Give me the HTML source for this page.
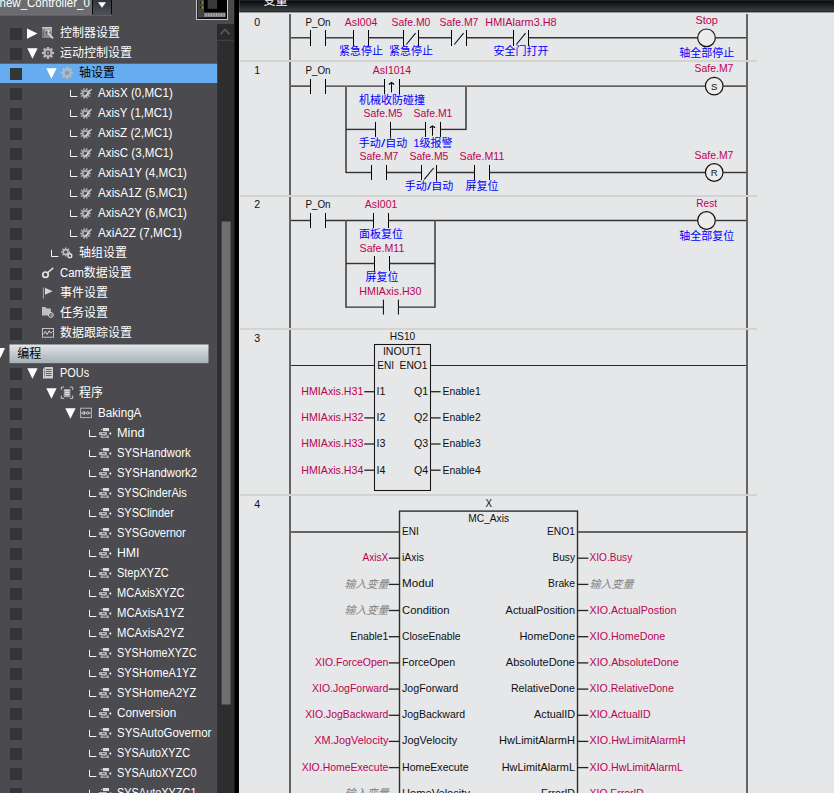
<!DOCTYPE html>
<html><head><meta charset="utf-8"><title>Ladder</title>
<style>
html,body{margin:0;padding:0;background:#e6e7e8;}
body{width:834px;height:793px;overflow:hidden;font-family:"Liberation Sans","Noto Sans CJK SC",sans-serif;}
svg{display:block;font-family:"Liberation Sans","Noto Sans CJK SC",sans-serif;}
</style></head><body>
<svg width="834" height="793" viewBox="0 0 834 793">
<defs>
<linearGradient id="tb" x1="0" y1="0" x2="0" y2="1"><stop offset="0" stop-color="#303032"/><stop offset="0.1" stop-color="#0b0c0d"/><stop offset="0.5" stop-color="#22262a"/><stop offset="0.82" stop-color="#393c3f"/><stop offset="0.9" stop-color="#2b2b2c"/><stop offset="1" stop-color="#2b2b2c"/></linearGradient>
<linearGradient id="hd" x1="0" y1="0" x2="0" y2="1"><stop offset="0" stop-color="#e3e7ea"/><stop offset="0.5" stop-color="#c3cad0"/><stop offset="1" stop-color="#a7b1b9"/></linearGradient>
<linearGradient id="bt" x1="0" y1="0" x2="0" y2="1"><stop offset="0" stop-color="#33343a"/><stop offset="1" stop-color="#4e515a"/></linearGradient>
</defs>
<rect x="0" y="0" width="834" height="793" fill="#e6e7e8"/>
<rect x="0" y="0" width="234" height="793" fill="#4a4a4f"/>
<rect x="234.1" y="0" width="5.1" height="793" fill="#000"/>
<rect x="239.2" y="12" width="0.9" height="781" fill="#f3f3f3"/>
<rect x="239.2" y="0" width="595" height="12.4" fill="url(#tb)"/>
<rect x="0" y="0" width="92" height="15" fill="#6c6c70"/>
<rect x="92" y="0" width="20" height="15" fill="#0a0a0a"/>
<rect x="93" y="0" width="18" height="14.6" fill="url(#bt)"/>
<path d="M98 2.2H106L102 7.8Z" fill="#fff"/>
<rect x="0" y="14.6" width="112" height="0.9" fill="#77777b"/>
<text x="-0.5" y="7.4" fill="#fff" font-size="12" textLength="90.3" lengthAdjust="spacingAndGlyphs">new_Controller_0</text>
<rect x="196.5" y="-2" width="31" height="21.5" fill="#000" stroke="#c8c8c8" stroke-width="1"/>
<rect x="197.5" y="0" width="6.5" height="19" fill="#444"/>
<rect x="207.7" y="0" width="9.4" height="8.8" fill="#3a3a3a"/>
<rect x="204" y="12.6" width="21.6" height="4.7" fill="#7c7c7c"/>
<rect x="205.5" y="13.2" width="1.1" height="3.2" fill="#adadad"/>
<rect x="208.1" y="13.2" width="1.1" height="3.2" fill="#adadad"/>
<rect x="210.7" y="13.2" width="1.1" height="3.2" fill="#adadad"/>
<rect x="213.3" y="13.2" width="1.1" height="3.2" fill="#adadad"/>
<rect x="215.9" y="13.2" width="1.1" height="3.2" fill="#adadad"/>
<rect x="218.5" y="13.2" width="1.1" height="3.2" fill="#adadad"/>
<rect x="221.1" y="13.2" width="1.1" height="3.2" fill="#adadad"/>
<rect x="223.7" y="13.2" width="1.1" height="3.2" fill="#adadad"/>
<rect x="197.5" y="17.5" width="29" height="1.5" fill="#111"/>
<path d="M199.5 2.5l2 -1.5v3zM199.5 7.5l2 -1.5v3z" fill="#000"/><rect x="201.5" y="1.2" width="1.6" height="2.6" fill="#a38c25"/><rect x="201.5" y="6.2" width="1.6" height="2.6" fill="#a38c25"/>
<rect x="217.2" y="24" width="16.8" height="769" fill="#2d2d2f"/>
<rect x="217.2" y="24" width="16.8" height="16" fill="#2a2a2d"/>
<rect x="217.2" y="39.8" width="16.8" height="0.9" fill="#48484c"/>
<path d="M220.4 34.3L225 29.5L229.6 34.3" fill="none" stroke="#58585b" stroke-width="1.8"/>
<rect x="221.6" y="221.5" width="9" height="483" fill="#6e6e6e"/>
<rect x="10" y="28" width="12" height="12" fill="#34343b"/>
<path d="M27.0 28.6L37.5 33.6L27.0 38.7Z" fill="#fff"/>
<rect x="42.2" y="27" width="9.8" height="10.9" fill="#8b8b8d"/>
<rect x="42.2" y="27" width="9.8" height="1.6" fill="#c9c9c9"/>
<rect x="45.2" y="29.2" width="6.8" height="2" fill="#b5b5b6"/>
<rect x="43" y="31.5" width="0.9" height="5.5" fill="#6a6a6c"/>
<circle cx="47.6" cy="32.6" r="1.9" fill="#59595c"/>
<path d="M47.6 32.6L53 38.3" stroke="#d8d8d8" stroke-width="1.7"/>
<circle cx="48.4" cy="31.6" r="1.1" fill="#e6e6e6"/>
<text x="60.0" y="37.3" fill="#fff" font-size="12" textLength="60" lengthAdjust="spacingAndGlyphs">控制器设置</text>
<rect x="10" y="48" width="12" height="12" fill="#34343b"/>
<path d="M27.3 48.3H37.6L32.45 58.7Z" fill="#fff"/>
<circle cx="48.0" cy="52.9" r="3.5" fill="none" stroke="#b9b9bc" stroke-width="2.1"/>
<path d="M52.00 52.90L54.00 52.90M50.83 55.73L52.24 57.14M48.00 56.90L48.00 58.90M45.17 55.73L43.76 57.14M44.00 52.90L42.00 52.90M45.17 50.07L43.76 48.66M48.00 48.90L48.00 46.90M50.83 50.07L52.24 48.66" stroke="#b9b9bc" stroke-width="2.3"/>
<rect x="46.9" y="51.8" width="2.2" height="2.2" fill="#97979a"/>
<text x="60.0" y="57.3" fill="#fff" font-size="12" textLength="72" lengthAdjust="spacingAndGlyphs">运动控制设置</text>
<rect x="0" y="63.7" width="217.2" height="19.3" fill="#67acee"/>
<rect x="10" y="68" width="12" height="12" fill="#34343b"/>
<path d="M46.3 68.3H56.6L51.45 78.7Z" fill="#fff"/>
<circle cx="67.0" cy="72.9" r="3.5" fill="none" stroke="#b9b9bc" stroke-width="2.1"/>
<path d="M71.00 72.90L73.00 72.90M69.83 75.73L71.24 77.14M67.00 76.90L67.00 78.90M64.17 75.73L62.76 77.14M63.00 72.90L61.00 72.90M64.17 70.07L62.76 68.66M67.00 68.90L67.00 66.90M69.83 70.07L71.24 68.66" stroke="#b9b9bc" stroke-width="2.3"/>
<rect x="65.9" y="71.8" width="2.2" height="2.2" fill="#97979a"/>
<text x="79.0" y="77.3" fill="#000" font-size="12" textLength="36" lengthAdjust="spacingAndGlyphs">轴设置</text>
<rect x="10" y="88" width="12" height="12" fill="#34343b"/>
<path d="M70.5 89.9V96.5H77.4" fill="none" stroke="#f4f4f4" stroke-width="1"/>
<circle cx="85.4" cy="93.4" r="2.6" fill="none" stroke="#adadb0" stroke-width="1.7"/>
<path d="M88.40 93.40L90.80 93.40M87.83 95.16L89.77 96.57M86.33 96.25L87.07 98.54M84.47 96.25L83.73 98.54M82.97 95.16L81.03 96.57M82.40 93.40L80.00 93.40M82.97 91.64L81.03 90.23M84.47 90.55L83.73 88.26M86.33 90.55L87.07 88.26M87.83 91.64L89.77 90.23" stroke="#adadb0" stroke-width="1.5"/>
<path d="M84.2 97.4L91.8 89.0" stroke="#e4e4e4" stroke-width="1.1"/>
<text x="98.0" y="97.1" fill="#fff" font-size="12" textLength="74.8" lengthAdjust="spacingAndGlyphs">AxisX (0,MC1)</text>
<rect x="10" y="108" width="12" height="12" fill="#34343b"/>
<path d="M70.5 109.9V116.5H77.4" fill="none" stroke="#f4f4f4" stroke-width="1"/>
<circle cx="85.4" cy="113.4" r="2.6" fill="none" stroke="#adadb0" stroke-width="1.7"/>
<path d="M88.40 113.40L90.80 113.40M87.83 115.16L89.77 116.57M86.33 116.25L87.07 118.54M84.47 116.25L83.73 118.54M82.97 115.16L81.03 116.57M82.40 113.40L80.00 113.40M82.97 111.64L81.03 110.23M84.47 110.55L83.73 108.26M86.33 110.55L87.07 108.26M87.83 111.64L89.77 110.23" stroke="#adadb0" stroke-width="1.5"/>
<path d="M84.2 117.4L91.8 109.0" stroke="#e4e4e4" stroke-width="1.1"/>
<text x="98.0" y="117.1" fill="#fff" font-size="12" textLength="74.3" lengthAdjust="spacingAndGlyphs">AxisY (1,MC1)</text>
<rect x="10" y="128" width="12" height="12" fill="#34343b"/>
<path d="M70.5 129.9V136.5H77.4" fill="none" stroke="#f4f4f4" stroke-width="1"/>
<circle cx="85.4" cy="133.4" r="2.6" fill="none" stroke="#adadb0" stroke-width="1.7"/>
<path d="M88.40 133.40L90.80 133.40M87.83 135.16L89.77 136.57M86.33 136.25L87.07 138.54M84.47 136.25L83.73 138.54M82.97 135.16L81.03 136.57M82.40 133.40L80.00 133.40M82.97 131.64L81.03 130.23M84.47 130.55L83.73 128.26M86.33 130.55L87.07 128.26M87.83 131.64L89.77 130.23" stroke="#adadb0" stroke-width="1.5"/>
<path d="M84.2 137.4L91.8 129.0" stroke="#e4e4e4" stroke-width="1.1"/>
<text x="98.0" y="137.1" fill="#fff" font-size="12" textLength="74.5" lengthAdjust="spacingAndGlyphs">AxisZ (2,MC1)</text>
<rect x="10" y="148" width="12" height="12" fill="#34343b"/>
<path d="M70.5 149.9V156.5H77.4" fill="none" stroke="#f4f4f4" stroke-width="1"/>
<circle cx="85.4" cy="153.4" r="2.6" fill="none" stroke="#adadb0" stroke-width="1.7"/>
<path d="M88.40 153.40L90.80 153.40M87.83 155.16L89.77 156.57M86.33 156.25L87.07 158.54M84.47 156.25L83.73 158.54M82.97 155.16L81.03 156.57M82.40 153.40L80.00 153.40M82.97 151.64L81.03 150.23M84.47 150.55L83.73 148.26M86.33 150.55L87.07 148.26M87.83 151.64L89.77 150.23" stroke="#adadb0" stroke-width="1.5"/>
<path d="M84.2 157.4L91.8 149.0" stroke="#e4e4e4" stroke-width="1.1"/>
<text x="98.0" y="157.1" fill="#fff" font-size="12" textLength="75.1" lengthAdjust="spacingAndGlyphs">AxisC (3,MC1)</text>
<rect x="10" y="168" width="12" height="12" fill="#34343b"/>
<path d="M70.5 169.9V176.5H77.4" fill="none" stroke="#f4f4f4" stroke-width="1"/>
<circle cx="85.4" cy="173.4" r="2.6" fill="none" stroke="#adadb0" stroke-width="1.7"/>
<path d="M88.40 173.40L90.80 173.40M87.83 175.16L89.77 176.57M86.33 176.25L87.07 178.54M84.47 176.25L83.73 178.54M82.97 175.16L81.03 176.57M82.40 173.40L80.00 173.40M82.97 171.64L81.03 170.23M84.47 170.55L83.73 168.26M86.33 170.55L87.07 168.26M87.83 171.64L89.77 170.23" stroke="#adadb0" stroke-width="1.5"/>
<path d="M84.2 177.4L91.8 169.0" stroke="#e4e4e4" stroke-width="1.1"/>
<text x="98.0" y="177.1" fill="#fff" font-size="12" textLength="89.0" lengthAdjust="spacingAndGlyphs">AxisA1Y (4,MC1)</text>
<rect x="10" y="188" width="12" height="12" fill="#34343b"/>
<path d="M70.5 189.9V196.5H77.4" fill="none" stroke="#f4f4f4" stroke-width="1"/>
<circle cx="85.4" cy="193.4" r="2.6" fill="none" stroke="#adadb0" stroke-width="1.7"/>
<path d="M88.40 193.40L90.80 193.40M87.83 195.16L89.77 196.57M86.33 196.25L87.07 198.54M84.47 196.25L83.73 198.54M82.97 195.16L81.03 196.57M82.40 193.40L80.00 193.40M82.97 191.64L81.03 190.23M84.47 190.55L83.73 188.26M86.33 190.55L87.07 188.26M87.83 191.64L89.77 190.23" stroke="#adadb0" stroke-width="1.5"/>
<path d="M84.2 197.4L91.8 189.0" stroke="#e4e4e4" stroke-width="1.1"/>
<text x="98.0" y="197.1" fill="#fff" font-size="12" textLength="89.2" lengthAdjust="spacingAndGlyphs">AxisA1Z (5,MC1)</text>
<rect x="10" y="208" width="12" height="12" fill="#34343b"/>
<path d="M70.5 209.9V216.5H77.4" fill="none" stroke="#f4f4f4" stroke-width="1"/>
<circle cx="85.4" cy="213.4" r="2.6" fill="none" stroke="#adadb0" stroke-width="1.7"/>
<path d="M88.40 213.40L90.80 213.40M87.83 215.16L89.77 216.57M86.33 216.25L87.07 218.54M84.47 216.25L83.73 218.54M82.97 215.16L81.03 216.57M82.40 213.40L80.00 213.40M82.97 211.64L81.03 210.23M84.47 210.55L83.73 208.26M86.33 210.55L87.07 208.26M87.83 211.64L89.77 210.23" stroke="#adadb0" stroke-width="1.5"/>
<path d="M84.2 217.4L91.8 209.0" stroke="#e4e4e4" stroke-width="1.1"/>
<text x="98.0" y="217.1" fill="#fff" font-size="12" textLength="89.0" lengthAdjust="spacingAndGlyphs">AxisA2Y (6,MC1)</text>
<rect x="10" y="228" width="12" height="12" fill="#34343b"/>
<path d="M70.5 229.9V236.5H77.4" fill="none" stroke="#f4f4f4" stroke-width="1"/>
<circle cx="85.4" cy="233.4" r="2.6" fill="none" stroke="#adadb0" stroke-width="1.7"/>
<path d="M88.40 233.40L90.80 233.40M87.83 235.16L89.77 236.57M86.33 236.25L87.07 238.54M84.47 236.25L83.73 238.54M82.97 235.16L81.03 236.57M82.40 233.40L80.00 233.40M82.97 231.64L81.03 230.23M84.47 230.55L83.73 228.26M86.33 230.55L87.07 228.26M87.83 231.64L89.77 230.23" stroke="#adadb0" stroke-width="1.5"/>
<path d="M84.2 237.4L91.8 229.0" stroke="#e4e4e4" stroke-width="1.1"/>
<text x="98.0" y="237.1" fill="#fff" font-size="12" textLength="83.9" lengthAdjust="spacingAndGlyphs">AxiA2Z (7,MC1)</text>
<rect x="10" y="248" width="12" height="12" fill="#34343b"/>
<path d="M51.5 249.9V256.5H58.4" fill="none" stroke="#f4f4f4" stroke-width="1"/>
<circle cx="65.7" cy="252.0" r="2.4" fill="none" stroke="#b9b9bc" stroke-width="1.6"/>
<path d="M68.50 252.00L70.30 252.00M67.68 253.98L68.95 255.25M65.70 254.80L65.70 256.60M63.72 253.98L62.45 255.25M62.90 252.00L61.10 252.00M63.72 250.02L62.45 248.75M65.70 249.20L65.70 247.40M67.68 250.02L68.95 248.75" stroke="#b9b9bc" stroke-width="1.6"/>
<circle cx="69.9" cy="255.7" r="1.9" fill="#4a4a4f" stroke="#e4e4e4" stroke-width="1.4"/>
<text x="79.0" y="257.3" fill="#fff" font-size="12" textLength="48" lengthAdjust="spacingAndGlyphs">轴组设置</text>
<rect x="10" y="268" width="12" height="12" fill="#34343b"/>
<circle cx="45.5" cy="274.7" r="2.7" fill="none" stroke="#e4e4e4" stroke-width="1.7"/>
<path d="M47.3 273L53.3 267.9" stroke="#e4e4e4" stroke-width="1.6"/>
<text x="60.0" y="277.3" fill="#fff" font-size="12" textLength="23.9" lengthAdjust="spacingAndGlyphs">Cam</text>
<text x="83.87" y="277.3" fill="#fff" font-size="12" textLength="48" lengthAdjust="spacingAndGlyphs">数据设置</text>
<rect x="10" y="288" width="12" height="12" fill="#34343b"/>
<path d="M43.4 287.4V298.6" stroke="#a9a9ac" stroke-width="1"/>
<path d="M45 287.8L52.6 291.3L45 294.8Z" fill="#d6d6d6"/>
<text x="60.0" y="297.3" fill="#fff" font-size="12" textLength="48" lengthAdjust="spacingAndGlyphs">事件设置</text>
<rect x="10" y="308" width="12" height="12" fill="#34343b"/>
<path d="M42 307h3.6l1 1.4h4.3v7h-8.9z" fill="#bfbfc1"/>
<circle cx="50.9" cy="315" r="2.4" fill="#4a4a4f" stroke="#e4e4e4" stroke-width="1"/>
<path d="M50.9 313.6V315.2H52.1" stroke="#e4e4e4" stroke-width="0.7" fill="none"/>
<text x="60.0" y="317.3" fill="#fff" font-size="12" textLength="48" lengthAdjust="spacingAndGlyphs">任务设置</text>
<rect x="10" y="328" width="12" height="12" fill="#34343b"/>
<rect x="42.5" y="328.5" width="11" height="8.7" fill="none" stroke="#c3c3c5" stroke-width="1"/>
<path d="M43.5 334.2l1.8 -2.8l1.8 3.2l2 -3.8l1.6 2.4l1.8 -1.8" fill="none" stroke="#e4e4e4" stroke-width="0.9"/>
<text x="60.0" y="337.3" fill="#fff" font-size="12" textLength="72" lengthAdjust="spacingAndGlyphs">数据跟踪设置</text>
<rect x="9.5" y="344.5" width="199" height="18.7" fill="url(#hd)"/>
<path d="M-4 348H5L0.5 358Z" fill="#fff"/>
<text x="17.3" y="357.5" fill="#000" font-size="12" textLength="24" lengthAdjust="spacingAndGlyphs">编程</text>
<rect x="10" y="368" width="12" height="12" fill="#34343b"/>
<path d="M27.3 368.3H37.6L32.45 378.7Z" fill="#fff"/>
<path d="M45 367h8v11.4h-10v-9.4z" fill="#cfcfd0"/>
<path d="M43 369h2v-2z" fill="#8d8d90"/>
<path d="M46 369.5h5.5M46 371.5h5.5M46 373.5h5.5M46 375.5h5.5" stroke="#606064" stroke-width="1"/>
<path d="M44.6 370v6.5" stroke="#77777a" stroke-width="0.9"/>
<text x="60.0" y="377.1" fill="#fff" font-size="12" textLength="29.1" lengthAdjust="spacingAndGlyphs">POUs</text>
<rect x="10" y="388" width="12" height="12" fill="#34343b"/>
<path d="M46.3 388.3H56.6L51.45 398.7Z" fill="#fff"/>
<path d="M61.3 389.90000000000003V387.1H64.1M69.9 387.1H72.7V389.90000000000003M72.7 395.59999999999997V398.4H69.9M64.1 398.4H61.3V395.59999999999997" fill="none" stroke="#c9c9cb" stroke-width="1"/>
<rect x="63.8" y="389" width="6.6" height="8.2" fill="#a5a5a8"/>
<path d="M65 390.6h4.2M65 392.6h4.2M65 394.6h4.2" stroke="#e8e8e8" stroke-width="1"/>
<text x="79.0" y="397.3" fill="#fff" font-size="12" textLength="24" lengthAdjust="spacingAndGlyphs">程序</text>
<rect x="10" y="408" width="12" height="12" fill="#34343b"/>
<path d="M65.3 408.3H75.6L70.45 418.7Z" fill="#fff"/>
<rect x="80.6" y="408.2" width="10.8" height="9.4" fill="none" stroke="#b6b6b8" stroke-width="1"/>
<path d="M81 413h2M84.6 413h2M89 413h2M83.2 411.2v3.6M84.5 411.2v3.6" stroke="#e4e4e4" stroke-width="0.8" fill="none"/>
<circle cx="87.8" cy="413" r="1.3" fill="none" stroke="#e4e4e4" stroke-width="0.8"/>
<text x="98.0" y="417.1" fill="#fff" font-size="12" textLength="43.4" lengthAdjust="spacingAndGlyphs">BakingA</text>
<rect x="10" y="428" width="12" height="12" fill="#34343b"/>
<path d="M89.5 429.9V436.5H96.4" fill="none" stroke="#f4f4f4" stroke-width="1"/>
<rect x="102.8" y="428" width="6.2" height="3.1" fill="#dcdcde"/>
<circle cx="101.4" cy="429.5" r="0.55" fill="#eee"/>
<rect x="98.9" y="432" width="7.9" height="3" fill="#b6b6b8"/>
<rect x="102" y="433.1" width="2.8" height="0.8" fill="#55555a"/>
<path d="M108.9 433.5l2.2 -1.4v2.8z" fill="#f0f0f0"/>
<rect x="100.6" y="435.4" width="8.4" height="2.6" fill="#a8a8aa"/>
<rect x="103" y="436.3" width="3.7" height="0.8" fill="#55555a"/>
<text x="117.0" y="437.1" fill="#fff" font-size="12" textLength="27.5" lengthAdjust="spacingAndGlyphs">Mind</text>
<rect x="10" y="448" width="12" height="12" fill="#34343b"/>
<path d="M89.5 449.9V456.5H96.4" fill="none" stroke="#f4f4f4" stroke-width="1"/>
<rect x="102.8" y="448" width="6.2" height="3.1" fill="#dcdcde"/>
<circle cx="101.4" cy="449.5" r="0.55" fill="#eee"/>
<rect x="98.9" y="452" width="7.9" height="3" fill="#b6b6b8"/>
<rect x="102" y="453.1" width="2.8" height="0.8" fill="#55555a"/>
<path d="M108.9 453.5l2.2 -1.4v2.8z" fill="#f0f0f0"/>
<rect x="100.6" y="455.4" width="8.4" height="2.6" fill="#a8a8aa"/>
<rect x="103" y="456.3" width="3.7" height="0.8" fill="#55555a"/>
<text x="117.0" y="457.1" fill="#fff" font-size="12" textLength="73.7" lengthAdjust="spacingAndGlyphs">SYSHandwork</text>
<rect x="10" y="468" width="12" height="12" fill="#34343b"/>
<path d="M89.5 469.9V476.5H96.4" fill="none" stroke="#f4f4f4" stroke-width="1"/>
<rect x="102.8" y="468" width="6.2" height="3.1" fill="#dcdcde"/>
<circle cx="101.4" cy="469.5" r="0.55" fill="#eee"/>
<rect x="98.9" y="472" width="7.9" height="3" fill="#b6b6b8"/>
<rect x="102" y="473.1" width="2.8" height="0.8" fill="#55555a"/>
<path d="M108.9 473.5l2.2 -1.4v2.8z" fill="#f0f0f0"/>
<rect x="100.6" y="475.4" width="8.4" height="2.6" fill="#a8a8aa"/>
<rect x="103" y="476.3" width="3.7" height="0.8" fill="#55555a"/>
<text x="117.0" y="477.1" fill="#fff" font-size="12" textLength="80.1" lengthAdjust="spacingAndGlyphs">SYSHandwork2</text>
<rect x="10" y="488" width="12" height="12" fill="#34343b"/>
<path d="M89.5 489.9V496.5H96.4" fill="none" stroke="#f4f4f4" stroke-width="1"/>
<rect x="102.8" y="488" width="6.2" height="3.1" fill="#dcdcde"/>
<circle cx="101.4" cy="489.5" r="0.55" fill="#eee"/>
<rect x="98.9" y="492" width="7.9" height="3" fill="#b6b6b8"/>
<rect x="102" y="493.1" width="2.8" height="0.8" fill="#55555a"/>
<path d="M108.9 493.5l2.2 -1.4v2.8z" fill="#f0f0f0"/>
<rect x="100.6" y="495.4" width="8.4" height="2.6" fill="#a8a8aa"/>
<rect x="103" y="496.3" width="3.7" height="0.8" fill="#55555a"/>
<text x="117.0" y="497.1" fill="#fff" font-size="12" textLength="69.7" lengthAdjust="spacingAndGlyphs">SYSCinderAis</text>
<rect x="10" y="508" width="12" height="12" fill="#34343b"/>
<path d="M89.5 509.9V516.5H96.4" fill="none" stroke="#f4f4f4" stroke-width="1"/>
<rect x="102.8" y="508" width="6.2" height="3.1" fill="#dcdcde"/>
<circle cx="101.4" cy="509.5" r="0.55" fill="#eee"/>
<rect x="98.9" y="512" width="7.9" height="3" fill="#b6b6b8"/>
<rect x="102" y="513.1" width="2.8" height="0.8" fill="#55555a"/>
<path d="M108.9 513.5l2.2 -1.4v2.8z" fill="#f0f0f0"/>
<rect x="100.6" y="515.4" width="8.4" height="2.6" fill="#a8a8aa"/>
<rect x="103" y="516.3" width="3.7" height="0.8" fill="#55555a"/>
<text x="117.0" y="517.1" fill="#fff" font-size="12" textLength="56.9" lengthAdjust="spacingAndGlyphs">SYSClinder</text>
<rect x="10" y="528" width="12" height="12" fill="#34343b"/>
<path d="M89.5 529.9V536.5H96.4" fill="none" stroke="#f4f4f4" stroke-width="1"/>
<rect x="102.8" y="528" width="6.2" height="3.1" fill="#dcdcde"/>
<circle cx="101.4" cy="529.5" r="0.55" fill="#eee"/>
<rect x="98.9" y="532" width="7.9" height="3" fill="#b6b6b8"/>
<rect x="102" y="533.1" width="2.8" height="0.8" fill="#55555a"/>
<path d="M108.9 533.5l2.2 -1.4v2.8z" fill="#f0f0f0"/>
<rect x="100.6" y="535.4" width="8.4" height="2.6" fill="#a8a8aa"/>
<rect x="103" y="536.3" width="3.7" height="0.8" fill="#55555a"/>
<text x="117.0" y="537.1" fill="#fff" font-size="12" textLength="68.8" lengthAdjust="spacingAndGlyphs">SYSGovernor</text>
<rect x="10" y="548" width="12" height="12" fill="#34343b"/>
<path d="M89.5 549.9V556.5H96.4" fill="none" stroke="#f4f4f4" stroke-width="1"/>
<rect x="102.8" y="548" width="6.2" height="3.1" fill="#dcdcde"/>
<circle cx="101.4" cy="549.5" r="0.55" fill="#eee"/>
<rect x="98.9" y="552" width="7.9" height="3" fill="#b6b6b8"/>
<rect x="102" y="553.1" width="2.8" height="0.8" fill="#55555a"/>
<path d="M108.9 553.5l2.2 -1.4v2.8z" fill="#f0f0f0"/>
<rect x="100.6" y="555.4" width="8.4" height="2.6" fill="#a8a8aa"/>
<rect x="103" y="556.3" width="3.7" height="0.8" fill="#55555a"/>
<text x="117.0" y="557.1" fill="#fff" font-size="12" textLength="22.5" lengthAdjust="spacingAndGlyphs">HMI</text>
<rect x="10" y="568" width="12" height="12" fill="#34343b"/>
<path d="M89.5 569.9V576.5H96.4" fill="none" stroke="#f4f4f4" stroke-width="1"/>
<rect x="102.8" y="568" width="6.2" height="3.1" fill="#dcdcde"/>
<circle cx="101.4" cy="569.5" r="0.55" fill="#eee"/>
<rect x="98.9" y="572" width="7.9" height="3" fill="#b6b6b8"/>
<rect x="102" y="573.1" width="2.8" height="0.8" fill="#55555a"/>
<path d="M108.9 573.5l2.2 -1.4v2.8z" fill="#f0f0f0"/>
<rect x="100.6" y="575.4" width="8.4" height="2.6" fill="#a8a8aa"/>
<rect x="103" y="576.3" width="3.7" height="0.8" fill="#55555a"/>
<text x="117.0" y="577.1" fill="#fff" font-size="12" textLength="51.8" lengthAdjust="spacingAndGlyphs">StepXYZC</text>
<rect x="10" y="588" width="12" height="12" fill="#34343b"/>
<path d="M89.5 589.9V596.5H96.4" fill="none" stroke="#f4f4f4" stroke-width="1"/>
<rect x="102.8" y="588" width="6.2" height="3.1" fill="#dcdcde"/>
<circle cx="101.4" cy="589.5" r="0.55" fill="#eee"/>
<rect x="98.9" y="592" width="7.9" height="3" fill="#b6b6b8"/>
<rect x="102" y="593.1" width="2.8" height="0.8" fill="#55555a"/>
<path d="M108.9 593.5l2.2 -1.4v2.8z" fill="#f0f0f0"/>
<rect x="100.6" y="595.4" width="8.4" height="2.6" fill="#a8a8aa"/>
<rect x="103" y="596.3" width="3.7" height="0.8" fill="#55555a"/>
<text x="117.0" y="597.1" fill="#fff" font-size="12" textLength="67.4" lengthAdjust="spacingAndGlyphs">MCAxisXYZC</text>
<rect x="10" y="608" width="12" height="12" fill="#34343b"/>
<path d="M89.5 609.9V616.5H96.4" fill="none" stroke="#f4f4f4" stroke-width="1"/>
<rect x="102.8" y="608" width="6.2" height="3.1" fill="#dcdcde"/>
<circle cx="101.4" cy="609.5" r="0.55" fill="#eee"/>
<rect x="98.9" y="612" width="7.9" height="3" fill="#b6b6b8"/>
<rect x="102" y="613.1" width="2.8" height="0.8" fill="#55555a"/>
<path d="M108.9 613.5l2.2 -1.4v2.8z" fill="#f0f0f0"/>
<rect x="100.6" y="615.4" width="8.4" height="2.6" fill="#a8a8aa"/>
<rect x="103" y="616.3" width="3.7" height="0.8" fill="#55555a"/>
<text x="117.0" y="617.1" fill="#fff" font-size="12" textLength="67.1" lengthAdjust="spacingAndGlyphs">MCAxisA1YZ</text>
<rect x="10" y="628" width="12" height="12" fill="#34343b"/>
<path d="M89.5 629.9V636.5H96.4" fill="none" stroke="#f4f4f4" stroke-width="1"/>
<rect x="102.8" y="628" width="6.2" height="3.1" fill="#dcdcde"/>
<circle cx="101.4" cy="629.5" r="0.55" fill="#eee"/>
<rect x="98.9" y="632" width="7.9" height="3" fill="#b6b6b8"/>
<rect x="102" y="633.1" width="2.8" height="0.8" fill="#55555a"/>
<path d="M108.9 633.5l2.2 -1.4v2.8z" fill="#f0f0f0"/>
<rect x="100.6" y="635.4" width="8.4" height="2.6" fill="#a8a8aa"/>
<rect x="103" y="636.3" width="3.7" height="0.8" fill="#55555a"/>
<text x="117.0" y="637.1" fill="#fff" font-size="12" textLength="67.1" lengthAdjust="spacingAndGlyphs">MCAxisA2YZ</text>
<rect x="10" y="648" width="12" height="12" fill="#34343b"/>
<path d="M89.5 649.9V656.5H96.4" fill="none" stroke="#f4f4f4" stroke-width="1"/>
<rect x="102.8" y="648" width="6.2" height="3.1" fill="#dcdcde"/>
<circle cx="101.4" cy="649.5" r="0.55" fill="#eee"/>
<rect x="98.9" y="652" width="7.9" height="3" fill="#b6b6b8"/>
<rect x="102" y="653.1" width="2.8" height="0.8" fill="#55555a"/>
<path d="M108.9 653.5l2.2 -1.4v2.8z" fill="#f0f0f0"/>
<rect x="100.6" y="655.4" width="8.4" height="2.6" fill="#a8a8aa"/>
<rect x="103" y="656.3" width="3.7" height="0.8" fill="#55555a"/>
<text x="117.0" y="657.1" fill="#fff" font-size="12" textLength="79.5" lengthAdjust="spacingAndGlyphs">SYSHomeXYZC</text>
<rect x="10" y="668" width="12" height="12" fill="#34343b"/>
<path d="M89.5 669.9V676.5H96.4" fill="none" stroke="#f4f4f4" stroke-width="1"/>
<rect x="102.8" y="668" width="6.2" height="3.1" fill="#dcdcde"/>
<circle cx="101.4" cy="669.5" r="0.55" fill="#eee"/>
<rect x="98.9" y="672" width="7.9" height="3" fill="#b6b6b8"/>
<rect x="102" y="673.1" width="2.8" height="0.8" fill="#55555a"/>
<path d="M108.9 673.5l2.2 -1.4v2.8z" fill="#f0f0f0"/>
<rect x="100.6" y="675.4" width="8.4" height="2.6" fill="#a8a8aa"/>
<rect x="103" y="676.3" width="3.7" height="0.8" fill="#55555a"/>
<text x="117.0" y="677.1" fill="#fff" font-size="12" textLength="79.2" lengthAdjust="spacingAndGlyphs">SYSHomeA1YZ</text>
<rect x="10" y="688" width="12" height="12" fill="#34343b"/>
<path d="M89.5 689.9V696.5H96.4" fill="none" stroke="#f4f4f4" stroke-width="1"/>
<rect x="102.8" y="688" width="6.2" height="3.1" fill="#dcdcde"/>
<circle cx="101.4" cy="689.5" r="0.55" fill="#eee"/>
<rect x="98.9" y="692" width="7.9" height="3" fill="#b6b6b8"/>
<rect x="102" y="693.1" width="2.8" height="0.8" fill="#55555a"/>
<path d="M108.9 693.5l2.2 -1.4v2.8z" fill="#f0f0f0"/>
<rect x="100.6" y="695.4" width="8.4" height="2.6" fill="#a8a8aa"/>
<rect x="103" y="696.3" width="3.7" height="0.8" fill="#55555a"/>
<text x="117.0" y="697.1" fill="#fff" font-size="12" textLength="79.2" lengthAdjust="spacingAndGlyphs">SYSHomeA2YZ</text>
<rect x="10" y="708" width="12" height="12" fill="#34343b"/>
<path d="M89.5 709.9V716.5H96.4" fill="none" stroke="#f4f4f4" stroke-width="1"/>
<rect x="102.8" y="708" width="6.2" height="3.1" fill="#dcdcde"/>
<circle cx="101.4" cy="709.5" r="0.55" fill="#eee"/>
<rect x="98.9" y="712" width="7.9" height="3" fill="#b6b6b8"/>
<rect x="102" y="713.1" width="2.8" height="0.8" fill="#55555a"/>
<path d="M108.9 713.5l2.2 -1.4v2.8z" fill="#f0f0f0"/>
<rect x="100.6" y="715.4" width="8.4" height="2.6" fill="#a8a8aa"/>
<rect x="103" y="716.3" width="3.7" height="0.8" fill="#55555a"/>
<text x="117.0" y="717.1" fill="#fff" font-size="12" textLength="59.2" lengthAdjust="spacingAndGlyphs">Conversion</text>
<rect x="10" y="728" width="12" height="12" fill="#34343b"/>
<path d="M89.5 729.9V736.5H96.4" fill="none" stroke="#f4f4f4" stroke-width="1"/>
<rect x="102.8" y="728" width="6.2" height="3.1" fill="#dcdcde"/>
<circle cx="101.4" cy="729.5" r="0.55" fill="#eee"/>
<rect x="98.9" y="732" width="7.9" height="3" fill="#b6b6b8"/>
<rect x="102" y="733.1" width="2.8" height="0.8" fill="#55555a"/>
<path d="M108.9 733.5l2.2 -1.4v2.8z" fill="#f0f0f0"/>
<rect x="100.6" y="735.4" width="8.4" height="2.6" fill="#a8a8aa"/>
<rect x="103" y="736.3" width="3.7" height="0.8" fill="#55555a"/>
<text x="117.0" y="737.1" fill="#fff" font-size="12" textLength="94.4" lengthAdjust="spacingAndGlyphs">SYSAutoGovernor</text>
<rect x="10" y="748" width="12" height="12" fill="#34343b"/>
<path d="M89.5 749.9V756.5H96.4" fill="none" stroke="#f4f4f4" stroke-width="1"/>
<rect x="102.8" y="748" width="6.2" height="3.1" fill="#dcdcde"/>
<circle cx="101.4" cy="749.5" r="0.55" fill="#eee"/>
<rect x="98.9" y="752" width="7.9" height="3" fill="#b6b6b8"/>
<rect x="102" y="753.1" width="2.8" height="0.8" fill="#55555a"/>
<path d="M108.9 753.5l2.2 -1.4v2.8z" fill="#f0f0f0"/>
<rect x="100.6" y="755.4" width="8.4" height="2.6" fill="#a8a8aa"/>
<rect x="103" y="756.3" width="3.7" height="0.8" fill="#55555a"/>
<text x="117.0" y="757.1" fill="#fff" font-size="12" textLength="73.0" lengthAdjust="spacingAndGlyphs">SYSAutoXYZC</text>
<rect x="10" y="768" width="12" height="12" fill="#34343b"/>
<path d="M89.5 769.9V776.5H96.4" fill="none" stroke="#f4f4f4" stroke-width="1"/>
<rect x="102.8" y="768" width="6.2" height="3.1" fill="#dcdcde"/>
<circle cx="101.4" cy="769.5" r="0.55" fill="#eee"/>
<rect x="98.9" y="772" width="7.9" height="3" fill="#b6b6b8"/>
<rect x="102" y="773.1" width="2.8" height="0.8" fill="#55555a"/>
<path d="M108.9 773.5l2.2 -1.4v2.8z" fill="#f0f0f0"/>
<rect x="100.6" y="775.4" width="8.4" height="2.6" fill="#a8a8aa"/>
<rect x="103" y="776.3" width="3.7" height="0.8" fill="#55555a"/>
<text x="117.0" y="777.1" fill="#fff" font-size="12" textLength="79.5" lengthAdjust="spacingAndGlyphs">SYSAutoXYZC0</text>
<rect x="10" y="788" width="12" height="12" fill="#34343b"/>
<path d="M89.5 789.9V796.5H96.4" fill="none" stroke="#f4f4f4" stroke-width="1"/>
<rect x="102.8" y="788" width="6.2" height="3.1" fill="#dcdcde"/>
<circle cx="101.4" cy="789.5" r="0.55" fill="#eee"/>
<rect x="98.9" y="792" width="7.9" height="3" fill="#b6b6b8"/>
<rect x="102" y="793.1" width="2.8" height="0.8" fill="#55555a"/>
<path d="M108.9 793.5l2.2 -1.4v2.8z" fill="#f0f0f0"/>
<rect x="100.6" y="795.4" width="8.4" height="2.6" fill="#a8a8aa"/>
<rect x="103" y="796.3" width="3.7" height="0.8" fill="#55555a"/>
<text x="117.0" y="797.1" fill="#fff" font-size="12" textLength="79.5" lengthAdjust="spacingAndGlyphs">SYSAutoXYZC1</text>
<rect x="289" y="14" width="2" height="46.0" fill="#646464"/>
<rect x="746" y="14" width="2" height="46.0" fill="#646464"/>
<rect x="289" y="62" width="2" height="133.0" fill="#646464"/>
<rect x="746" y="62" width="2" height="133.0" fill="#646464"/>
<rect x="289" y="197" width="2" height="131.0" fill="#646464"/>
<rect x="746" y="197" width="2" height="131.0" fill="#646464"/>
<rect x="289" y="330" width="2" height="164.0" fill="#646464"/>
<rect x="746" y="330" width="2" height="164.0" fill="#646464"/>
<rect x="289" y="496" width="2" height="297.0" fill="#646464"/>
<rect x="746" y="496" width="2" height="297.0" fill="#646464"/>
<rect x="240" y="60" width="517" height="2" fill="#d3d3cf"/>
<rect x="240" y="195" width="517" height="2" fill="#d3d3cf"/>
<rect x="240" y="328" width="517" height="2" fill="#d3d3cf"/>
<rect x="240" y="494" width="517" height="2" fill="#d3d3cf"/>
<text x="254.2" y="25.6" fill="#101010" font-size="11" textLength="5.9" lengthAdjust="spacingAndGlyphs">0</text>
<text x="254.2" y="73.7" fill="#101010" font-size="11" textLength="5.9" lengthAdjust="spacingAndGlyphs">1</text>
<text x="254.2" y="208.3" fill="#101010" font-size="11" textLength="5.9" lengthAdjust="spacingAndGlyphs">2</text>
<text x="254.2" y="342.0" fill="#101010" font-size="11" textLength="5.9" lengthAdjust="spacingAndGlyphs">3</text>
<text x="254.2" y="507.6" fill="#101010" font-size="11" textLength="5.9" lengthAdjust="spacingAndGlyphs">4</text>
<path d="M291.0 37.8H310.5" stroke="#333333" stroke-width="1.4"/>
<path d="M310.5 30.0V46.0" stroke="#000" stroke-width="1.0"/>
<path d="M325.5 30.0V46.0" stroke="#000" stroke-width="1.0"/>
<text x="318.0" y="25.5" fill="#101010" font-size="11" text-anchor="middle" textLength="25.2" lengthAdjust="spacingAndGlyphs">P_On</text>
<path d="M325.5 37.8H353.5" stroke="#333333" stroke-width="1.4"/>
<path d="M353.5 30.0V46.0" stroke="#000" stroke-width="1.0"/>
<path d="M368.5 30.0V46.0" stroke="#000" stroke-width="1.0"/>
<text x="361.0" y="25.5" fill="#bb0353" font-size="11" text-anchor="middle" textLength="32.5" lengthAdjust="spacingAndGlyphs">AsI004</text>
<text x="339.0" y="55.2" fill="#0000ff" font-size="11" textLength="44" lengthAdjust="spacingAndGlyphs">紧急停止</text>
<path d="M368.5 37.8H403.5" stroke="#333333" stroke-width="1.4"/>
<path d="M403.5 30.0V46.0" stroke="#000" stroke-width="1.0"/>
<path d="M418.5 30.0V46.0" stroke="#000" stroke-width="1.0"/>
<path d="M406.3 44.5L415.6 33.2" stroke="#111" stroke-width="1.1"/>
<text x="411.0" y="25.5" fill="#bb0353" font-size="11" text-anchor="middle" textLength="38.8" lengthAdjust="spacingAndGlyphs">Safe.M0</text>
<text x="389.0" y="55.2" fill="#0000ff" font-size="11" textLength="44" lengthAdjust="spacingAndGlyphs">紧急停止</text>
<path d="M418.5 37.8H451.5" stroke="#333333" stroke-width="1.4"/>
<path d="M451.5 30.0V46.0" stroke="#000" stroke-width="1.0"/>
<path d="M466.5 30.0V46.0" stroke="#000" stroke-width="1.0"/>
<path d="M454.3 44.5L463.6 33.2" stroke="#111" stroke-width="1.1"/>
<text x="459.0" y="25.5" fill="#bb0353" font-size="11" text-anchor="middle" textLength="38.8" lengthAdjust="spacingAndGlyphs">Safe.M7</text>
<path d="M466.5 37.8H513.5" stroke="#333333" stroke-width="1.4"/>
<path d="M513.5 30.0V46.0" stroke="#000" stroke-width="1.0"/>
<path d="M528.5 30.0V46.0" stroke="#000" stroke-width="1.0"/>
<path d="M516.3 44.5L525.6 33.2" stroke="#111" stroke-width="1.1"/>
<text x="521.0" y="25.5" fill="#bb0353" font-size="11" text-anchor="middle" textLength="71.3" lengthAdjust="spacingAndGlyphs">HMIAlarm3.H8</text>
<text x="493.5" y="55.2" fill="#0000ff" font-size="11" textLength="55" lengthAdjust="spacingAndGlyphs">安全门打开</text>
<path d="M528.5 37.8H697.6" stroke="#333333" stroke-width="1.4"/>
<circle cx="706.5" cy="37.8" r="8.8" fill="#ececed" stroke="#111" stroke-width="1.2"/>
<path d="M715.4 37.8H746.0" stroke="#333333" stroke-width="1.4"/>
<text x="706.7" y="24.0" fill="#bb0353" font-size="11" text-anchor="middle" textLength="22.5" lengthAdjust="spacingAndGlyphs">Stop</text>
<text x="679.2" y="56.7" fill="#0000ff" font-size="11" textLength="55" lengthAdjust="spacingAndGlyphs">轴全部停止</text>
<path d="M291.0 86.1H310.5" stroke="#333333" stroke-width="1.4"/>
<path d="M310.5 79.0V94.0" stroke="#000" stroke-width="1.0"/>
<path d="M325.5 79.0V94.0" stroke="#000" stroke-width="1.0"/>
<text x="318.0" y="73.8" fill="#101010" font-size="11" text-anchor="middle" textLength="25.2" lengthAdjust="spacingAndGlyphs">P_On</text>
<path d="M325.5 86.1H384.5" stroke="#333333" stroke-width="1.4"/>
<path d="M384.5 79.0V94.0" stroke="#000" stroke-width="1.0"/>
<path d="M399.5 79.0V94.0" stroke="#000" stroke-width="1.0"/>
<path d="M391.5 92.4V82.9" fill="none" stroke="#000" stroke-width="1"/>
<path d="M388.9 84.5L391.5 82.6L394.1 84.5" fill="none" stroke="#000" stroke-width="1.2"/>
<text x="392.0" y="73.8" fill="#bb0353" font-size="11" text-anchor="middle" textLength="38.4" lengthAdjust="spacingAndGlyphs">AsI1014</text>
<text x="359.0" y="103.5" fill="#0000ff" font-size="11" textLength="66" lengthAdjust="spacingAndGlyphs">机械收防碰撞</text>
<path d="M399.5 86.1H705.3" stroke="#333333" stroke-width="1.4"/>
<circle cx="714.2" cy="86.1" r="8.8" fill="#ececed" stroke="#111" stroke-width="1.2"/>
<text x="714.2" y="89.6" fill="#101010" font-size="9.5" text-anchor="middle">S</text>
<path d="M723.1 86.1H746.0" stroke="#333333" stroke-width="1.4"/>
<text x="714.0" y="72.0" fill="#bb0353" font-size="11" text-anchor="middle" textLength="38.8" lengthAdjust="spacingAndGlyphs">Safe.M7</text>
<path d="M346.0 86.1V173.1" stroke="#646464" stroke-width="2"/>
<path d="M466.0 86.1V130.1" stroke="#646464" stroke-width="2"/>
<path d="M346.0 129.4H375.5" stroke="#333333" stroke-width="1.4"/>
<path d="M375.5 121.9V136.9" stroke="#000" stroke-width="1.0"/>
<path d="M390.5 121.9V136.9" stroke="#000" stroke-width="1.0"/>
<text x="383.0" y="117.0" fill="#bb0353" font-size="11" text-anchor="middle" textLength="38.8" lengthAdjust="spacingAndGlyphs">Safe.M5</text>
<text x="358.85" y="146.7" fill="#0000ff" font-size="11" textLength="22" lengthAdjust="spacingAndGlyphs">手动</text>
<text x="380.9" y="146.7" fill="#0000ff" font-size="11" textLength="4.3" lengthAdjust="spacingAndGlyphs">/</text>
<text x="385.15" y="146.7" fill="#0000ff" font-size="11" textLength="22" lengthAdjust="spacingAndGlyphs">自动</text>
<path d="M390.5 129.4H425.5" stroke="#333333" stroke-width="1.4"/>
<path d="M425.5 121.9V136.9" stroke="#000" stroke-width="1.0"/>
<path d="M440.5 121.9V136.9" stroke="#000" stroke-width="1.0"/>
<path d="M432.5 135.7V126.2" fill="none" stroke="#000" stroke-width="1"/>
<path d="M429.9 127.8L432.5 125.9L435.1 127.8" fill="none" stroke="#000" stroke-width="1.2"/>
<text x="433.0" y="117.0" fill="#bb0353" font-size="11" text-anchor="middle" textLength="38.8" lengthAdjust="spacingAndGlyphs">Safe.M1</text>
<text x="413.5" y="146.7" fill="#0000ff" font-size="11" textLength="5.9" lengthAdjust="spacingAndGlyphs">1</text>
<text x="419.46" y="146.7" fill="#0000ff" font-size="11" textLength="33" lengthAdjust="spacingAndGlyphs">级报警</text>
<path d="M440.5 129.4H466.0" stroke="#333333" stroke-width="1.4"/>
<path d="M346.0 172.5H371.5" stroke="#333333" stroke-width="1.4"/>
<path d="M371.5 165.0V180.0" stroke="#000" stroke-width="1.0"/>
<path d="M386.5 165.0V180.0" stroke="#000" stroke-width="1.0"/>
<text x="379.0" y="160.2" fill="#bb0353" font-size="11" text-anchor="middle" textLength="38.8" lengthAdjust="spacingAndGlyphs">Safe.M7</text>
<path d="M386.5 172.5H421.5" stroke="#333333" stroke-width="1.4"/>
<path d="M421.5 165.0V180.0" stroke="#000" stroke-width="1.0"/>
<path d="M436.5 165.0V180.0" stroke="#000" stroke-width="1.0"/>
<path d="M424.3 179.3L433.6 168.0" stroke="#111" stroke-width="1.1"/>
<text x="429.0" y="160.2" fill="#bb0353" font-size="11" text-anchor="middle" textLength="38.8" lengthAdjust="spacingAndGlyphs">Safe.M5</text>
<text x="404.85" y="189.9" fill="#0000ff" font-size="11" textLength="22" lengthAdjust="spacingAndGlyphs">手动</text>
<text x="426.9" y="189.9" fill="#0000ff" font-size="11" textLength="4.3" lengthAdjust="spacingAndGlyphs">/</text>
<text x="431.15" y="189.9" fill="#0000ff" font-size="11" textLength="22" lengthAdjust="spacingAndGlyphs">自动</text>
<path d="M436.5 172.5H474.5" stroke="#333333" stroke-width="1.4"/>
<path d="M474.5 165.0V180.0" stroke="#000" stroke-width="1.0"/>
<path d="M489.5 165.0V180.0" stroke="#000" stroke-width="1.0"/>
<text x="482.0" y="160.2" fill="#bb0353" font-size="11" text-anchor="middle" textLength="44.8" lengthAdjust="spacingAndGlyphs">Safe.M11</text>
<text x="465.5" y="189.9" fill="#0000ff" font-size="11" textLength="33" lengthAdjust="spacingAndGlyphs">屏复位</text>
<path d="M489.5 172.5H705.3" stroke="#333333" stroke-width="1.4"/>
<circle cx="714.2" cy="172.5" r="8.8" fill="#ececed" stroke="#111" stroke-width="1.2"/>
<text x="714.2" y="176.0" fill="#101010" font-size="9.5" text-anchor="middle">R</text>
<path d="M723.1 172.5H746.0" stroke="#333333" stroke-width="1.4"/>
<text x="714.0" y="158.7" fill="#bb0353" font-size="11" text-anchor="middle" textLength="38.8" lengthAdjust="spacingAndGlyphs">Safe.M7</text>
<path d="M291.0 220.5H310.5" stroke="#333333" stroke-width="1.4"/>
<path d="M310.5 213.0V228.0" stroke="#000" stroke-width="1.0"/>
<path d="M325.5 213.0V228.0" stroke="#000" stroke-width="1.0"/>
<text x="318.0" y="208.4" fill="#101010" font-size="11" text-anchor="middle" textLength="25.2" lengthAdjust="spacingAndGlyphs">P_On</text>
<path d="M325.5 220.5H373.5" stroke="#333333" stroke-width="1.4"/>
<path d="M373.5 213.0V228.0" stroke="#000" stroke-width="1.0"/>
<path d="M388.5 213.0V228.0" stroke="#000" stroke-width="1.0"/>
<text x="381.0" y="208.4" fill="#bb0353" font-size="11" text-anchor="middle" textLength="32.5" lengthAdjust="spacingAndGlyphs">AsI001</text>
<text x="359.0" y="238.1" fill="#0000ff" font-size="11" textLength="44" lengthAdjust="spacingAndGlyphs">面板复位</text>
<path d="M388.5 220.5H697.6" stroke="#333333" stroke-width="1.4"/>
<circle cx="706.5" cy="220.5" r="8.8" fill="#ececed" stroke="#111" stroke-width="1.2"/>
<path d="M715.4 220.5H746.0" stroke="#333333" stroke-width="1.4"/>
<text x="706.7" y="206.9" fill="#bb0353" font-size="11" text-anchor="middle" textLength="20.7" lengthAdjust="spacingAndGlyphs">Rest</text>
<text x="679.2" y="239.6" fill="#0000ff" font-size="11" textLength="55" lengthAdjust="spacingAndGlyphs">轴全部复位</text>
<path d="M346.0 220.5V307.8" stroke="#646464" stroke-width="2"/>
<path d="M435.0 220.5V307.8" stroke="#646464" stroke-width="2"/>
<path d="M346.0 263.5H374.5" stroke="#333333" stroke-width="1.4"/>
<path d="M374.5 256.0V271.0" stroke="#000" stroke-width="1.0"/>
<path d="M389.5 256.0V271.0" stroke="#000" stroke-width="1.0"/>
<text x="382.0" y="252.0" fill="#bb0353" font-size="11" text-anchor="middle" textLength="44.8" lengthAdjust="spacingAndGlyphs">Safe.M11</text>
<text x="365.5" y="281.1" fill="#0000ff" font-size="11" textLength="33" lengthAdjust="spacingAndGlyphs">屏复位</text>
<path d="M389.5 263.5H435.0" stroke="#333333" stroke-width="1.4"/>
<path d="M346.0 307.1H383.4" stroke="#333333" stroke-width="1.4"/>
<path d="M383.4 299.6V314.6" stroke="#000" stroke-width="1.0"/>
<path d="M398.4 299.6V314.6" stroke="#000" stroke-width="1.0"/>
<text x="390.4" y="294.8" fill="#bb0353" font-size="11" text-anchor="middle" textLength="62.1" lengthAdjust="spacingAndGlyphs">HMIAxis.H30</text>
<path d="M398.4 307.1H435.0" stroke="#333333" stroke-width="1.4"/>
<rect x="374.5" y="344.5" width="56" height="146" fill="none" stroke="#151515" stroke-width="1.05"/>
<text x="402.5" y="339.6" fill="#101010" font-size="11" text-anchor="middle" textLength="25.5" lengthAdjust="spacingAndGlyphs">HS10</text>
<text x="402.3" y="355.2" fill="#101010" font-size="11" text-anchor="middle" textLength="38.7" lengthAdjust="spacingAndGlyphs">INOUT1</text>
<path d="M291.0 365.5H374.5" stroke="#2a2a2a" stroke-width="1.1"/>
<path d="M430.5 365.5H746.0" stroke="#2a2a2a" stroke-width="1.1"/>
<text x="377.3" y="368.7" fill="#101010" font-size="11" textLength="16.7" lengthAdjust="spacingAndGlyphs">ENI</text>
<text x="427.6" y="368.7" fill="#101010" font-size="11" text-anchor="end" textLength="28.0" lengthAdjust="spacingAndGlyphs">ENO1</text>
<path d="M364.3 391.7H374.5" stroke="#222" stroke-width="1.3"/>
<path d="M430.5 391.7H440.6" stroke="#222" stroke-width="1.3"/>
<text x="363.4" y="395.0" fill="#bb0353" font-size="11" text-anchor="end" textLength="62.1" lengthAdjust="spacingAndGlyphs">HMIAxis.H31</text>
<text x="376.6" y="395.0" fill="#101010" font-size="11" textLength="8.9" lengthAdjust="spacingAndGlyphs">I1</text>
<text x="428.2" y="395.0" fill="#101010" font-size="11" text-anchor="end" textLength="14.2" lengthAdjust="spacingAndGlyphs">Q1</text>
<text x="442.5" y="395.0" fill="#101010" font-size="11" textLength="38.2" lengthAdjust="spacingAndGlyphs">Enable1</text>
<path d="M364.3 417.9H374.5" stroke="#222" stroke-width="1.3"/>
<path d="M430.5 417.9H440.6" stroke="#222" stroke-width="1.3"/>
<text x="363.4" y="421.2" fill="#bb0353" font-size="11" text-anchor="end" textLength="62.1" lengthAdjust="spacingAndGlyphs">HMIAxis.H32</text>
<text x="376.6" y="421.2" fill="#101010" font-size="11" textLength="8.9" lengthAdjust="spacingAndGlyphs">I2</text>
<text x="428.2" y="421.2" fill="#101010" font-size="11" text-anchor="end" textLength="14.2" lengthAdjust="spacingAndGlyphs">Q2</text>
<text x="442.5" y="421.2" fill="#101010" font-size="11" textLength="38.2" lengthAdjust="spacingAndGlyphs">Enable2</text>
<path d="M364.3 444.0H374.5" stroke="#222" stroke-width="1.3"/>
<path d="M430.5 444.0H440.6" stroke="#222" stroke-width="1.3"/>
<text x="363.4" y="447.3" fill="#bb0353" font-size="11" text-anchor="end" textLength="62.1" lengthAdjust="spacingAndGlyphs">HMIAxis.H33</text>
<text x="376.6" y="447.3" fill="#101010" font-size="11" textLength="8.9" lengthAdjust="spacingAndGlyphs">I3</text>
<text x="428.2" y="447.3" fill="#101010" font-size="11" text-anchor="end" textLength="14.2" lengthAdjust="spacingAndGlyphs">Q3</text>
<text x="442.5" y="447.3" fill="#101010" font-size="11" textLength="38.2" lengthAdjust="spacingAndGlyphs">Enable3</text>
<path d="M364.3 470.2H374.5" stroke="#222" stroke-width="1.3"/>
<path d="M430.5 470.2H440.6" stroke="#222" stroke-width="1.3"/>
<text x="363.4" y="473.5" fill="#bb0353" font-size="11" text-anchor="end" textLength="62.1" lengthAdjust="spacingAndGlyphs">HMIAxis.H34</text>
<text x="376.6" y="473.5" fill="#101010" font-size="11" textLength="8.9" lengthAdjust="spacingAndGlyphs">I4</text>
<text x="428.2" y="473.5" fill="#101010" font-size="11" text-anchor="end" textLength="14.2" lengthAdjust="spacingAndGlyphs">Q4</text>
<text x="442.5" y="473.5" fill="#101010" font-size="11" textLength="38.2" lengthAdjust="spacingAndGlyphs">Enable4</text>
<rect x="399.5" y="511.1" width="178" height="300" fill="none" stroke="#2e2e2e" stroke-width="1.4"/>
<text x="488.7" y="506.7" fill="#101010" font-size="11" text-anchor="middle" textLength="6.5" lengthAdjust="spacingAndGlyphs">X</text>
<text x="488.7" y="521.6" fill="#101010" font-size="11" text-anchor="middle" textLength="40.7" lengthAdjust="spacingAndGlyphs">MC_Axis</text>
<path d="M291.0 532.0H399.5" stroke="#3a3a3a" stroke-width="1.5"/>
<path d="M577.5 532.0H746.0" stroke="#3a3a3a" stroke-width="1.5"/>
<text x="402.0" y="535.0" fill="#101010" font-size="11" textLength="16.7" lengthAdjust="spacingAndGlyphs">ENI</text>
<text x="402.0" y="561.2" fill="#101010" font-size="11" textLength="22.1" lengthAdjust="spacingAndGlyphs">iAxis</text>
<path d="M388.8 558.2H399.5" stroke="#222" stroke-width="1.3"/>
<text x="388.4" y="561.2" fill="#bb0353" font-size="11" text-anchor="end" textLength="26.0" lengthAdjust="spacingAndGlyphs">AxisX</text>
<text x="402.0" y="587.4" fill="#101010" font-size="11" textLength="31.7" lengthAdjust="spacingAndGlyphs">Modul</text>
<path d="M388.8 584.4H399.5" stroke="#222" stroke-width="1.3"/>
<text transform="translate(344.30,587.76) skewX(-18)" fill="#828282" font-size="11" textLength="44" lengthAdjust="spacingAndGlyphs">输入变量</text>
<text x="402.0" y="613.5" fill="#101010" font-size="11" textLength="47.6" lengthAdjust="spacingAndGlyphs">Condition</text>
<path d="M388.8 610.5H399.5" stroke="#222" stroke-width="1.3"/>
<text transform="translate(344.30,613.94) skewX(-18)" fill="#828282" font-size="11" textLength="44" lengthAdjust="spacingAndGlyphs">输入变量</text>
<text x="402.0" y="639.7" fill="#101010" font-size="11" textLength="58.6" lengthAdjust="spacingAndGlyphs">CloseEnable</text>
<path d="M388.8 636.7H399.5" stroke="#222" stroke-width="1.3"/>
<text x="388.4" y="639.7" fill="#101010" font-size="11" text-anchor="end" textLength="38.2" lengthAdjust="spacingAndGlyphs">Enable1</text>
<text x="402.0" y="665.9" fill="#101010" font-size="11" textLength="53.2" lengthAdjust="spacingAndGlyphs">ForceOpen</text>
<path d="M388.8 662.9H399.5" stroke="#222" stroke-width="1.3"/>
<text x="388.4" y="665.9" fill="#bb0353" font-size="11" text-anchor="end" textLength="73.3" lengthAdjust="spacingAndGlyphs">XIO.ForceOpen</text>
<text x="402.0" y="692.1" fill="#101010" font-size="11" textLength="56.3" lengthAdjust="spacingAndGlyphs">JogForward</text>
<path d="M388.8 689.1H399.5" stroke="#222" stroke-width="1.3"/>
<text x="388.4" y="692.1" fill="#bb0353" font-size="11" text-anchor="end" textLength="76.4" lengthAdjust="spacingAndGlyphs">XIO.JogForward</text>
<text x="402.0" y="718.3" fill="#101010" font-size="11" textLength="63.1" lengthAdjust="spacingAndGlyphs">JogBackward</text>
<path d="M388.8 715.3H399.5" stroke="#222" stroke-width="1.3"/>
<text x="388.4" y="718.3" fill="#bb0353" font-size="11" text-anchor="end" textLength="83.2" lengthAdjust="spacingAndGlyphs">XIO.JogBackward</text>
<text x="402.0" y="744.4" fill="#101010" font-size="11" textLength="55.3" lengthAdjust="spacingAndGlyphs">JogVelocity</text>
<path d="M388.8 741.4H399.5" stroke="#222" stroke-width="1.3"/>
<text x="388.4" y="744.4" fill="#bb0353" font-size="11" text-anchor="end" textLength="74.1" lengthAdjust="spacingAndGlyphs">XM.JogVelocity</text>
<text x="402.0" y="770.6" fill="#101010" font-size="11" textLength="66.6" lengthAdjust="spacingAndGlyphs">HomeExecute</text>
<path d="M388.8 767.6H399.5" stroke="#222" stroke-width="1.3"/>
<text x="388.4" y="770.6" fill="#bb0353" font-size="11" text-anchor="end" textLength="86.7" lengthAdjust="spacingAndGlyphs">XIO.HomeExecute</text>
<text x="402.0" y="796.8" fill="#101010" font-size="11" textLength="68.0" lengthAdjust="spacingAndGlyphs">HomeVelocity</text>
<path d="M388.8 793.8H399.5" stroke="#222" stroke-width="1.3"/>
<text transform="translate(344.30,797.20) skewX(-18)" fill="#828282" font-size="11" textLength="44" lengthAdjust="spacingAndGlyphs">输入变量</text>
<text x="575.0" y="535.0" fill="#101010" font-size="11" text-anchor="end" textLength="28.0" lengthAdjust="spacingAndGlyphs">ENO1</text>
<text x="575.0" y="561.2" fill="#101010" font-size="11" text-anchor="end" textLength="22.5" lengthAdjust="spacingAndGlyphs">Busy</text>
<path d="M577.5 558.2H588.3" stroke="#222" stroke-width="1.3"/>
<text x="589.6" y="561.2" fill="#bb0353" font-size="11" textLength="42.6" lengthAdjust="spacingAndGlyphs">XIO.Busy</text>
<text x="575.0" y="587.4" fill="#101010" font-size="11" text-anchor="end" textLength="26.9" lengthAdjust="spacingAndGlyphs">Brake</text>
<path d="M577.5 584.4H588.3" stroke="#222" stroke-width="1.3"/>
<text transform="translate(589.30,587.76) skewX(-18)" fill="#828282" font-size="11" textLength="44" lengthAdjust="spacingAndGlyphs">输入变量</text>
<text x="575.0" y="613.5" fill="#101010" font-size="11" text-anchor="end" textLength="69.4" lengthAdjust="spacingAndGlyphs">ActualPosition</text>
<path d="M577.5 610.5H588.3" stroke="#222" stroke-width="1.3"/>
<text x="589.6" y="613.5" fill="#bb0353" font-size="11" textLength="86.8" lengthAdjust="spacingAndGlyphs">XIO.ActualPostion</text>
<text x="575.0" y="639.7" fill="#101010" font-size="11" text-anchor="end" textLength="55.6" lengthAdjust="spacingAndGlyphs">HomeDone</text>
<path d="M577.5 636.7H588.3" stroke="#222" stroke-width="1.3"/>
<text x="589.6" y="639.7" fill="#bb0353" font-size="11" textLength="75.7" lengthAdjust="spacingAndGlyphs">XIO.HomeDone</text>
<text x="575.0" y="665.9" fill="#101010" font-size="11" text-anchor="end" textLength="69.2" lengthAdjust="spacingAndGlyphs">AbsoluteDone</text>
<path d="M577.5 662.9H588.3" stroke="#222" stroke-width="1.3"/>
<text x="589.6" y="665.9" fill="#bb0353" font-size="11" textLength="89.2" lengthAdjust="spacingAndGlyphs">XIO.AbsoluteDone</text>
<text x="575.0" y="692.1" fill="#101010" font-size="11" text-anchor="end" textLength="64.1" lengthAdjust="spacingAndGlyphs">RelativeDone</text>
<path d="M577.5 689.1H588.3" stroke="#222" stroke-width="1.3"/>
<text x="589.6" y="692.1" fill="#bb0353" font-size="11" textLength="84.2" lengthAdjust="spacingAndGlyphs">XIO.RelativeDone</text>
<text x="575.0" y="718.3" fill="#101010" font-size="11" text-anchor="end" textLength="41.0" lengthAdjust="spacingAndGlyphs">ActualID</text>
<path d="M577.5 715.3H588.3" stroke="#222" stroke-width="1.3"/>
<text x="589.6" y="718.3" fill="#bb0353" font-size="11" textLength="61.1" lengthAdjust="spacingAndGlyphs">XIO.ActualID</text>
<text x="575.0" y="744.4" fill="#101010" font-size="11" text-anchor="end" textLength="75.9" lengthAdjust="spacingAndGlyphs">HwLimitAlarmH</text>
<path d="M577.5 741.4H588.3" stroke="#222" stroke-width="1.3"/>
<text x="589.6" y="744.4" fill="#bb0353" font-size="11" textLength="96.0" lengthAdjust="spacingAndGlyphs">XIO.HwLimitAlarmH</text>
<text x="575.0" y="770.6" fill="#101010" font-size="11" text-anchor="end" textLength="73.3" lengthAdjust="spacingAndGlyphs">HwLimitAlarmL</text>
<path d="M577.5 767.6H588.3" stroke="#222" stroke-width="1.3"/>
<text x="589.6" y="770.6" fill="#bb0353" font-size="11" textLength="93.4" lengthAdjust="spacingAndGlyphs">XIO.HwLimitAlarmL</text>
<text x="575.0" y="796.8" fill="#101010" font-size="11" text-anchor="end" textLength="34.1" lengthAdjust="spacingAndGlyphs">ErrorID</text>
<path d="M577.5 793.8H588.3" stroke="#222" stroke-width="1.3"/>
<text x="589.6" y="796.8" fill="#bb0353" font-size="11" textLength="54.2" lengthAdjust="spacingAndGlyphs">XIO.ErrorID</text>
<text x="263.6" y="5.2" fill="#fff" font-size="12" textLength="24" lengthAdjust="spacingAndGlyphs">变量</text>
</svg>
</body></html>
